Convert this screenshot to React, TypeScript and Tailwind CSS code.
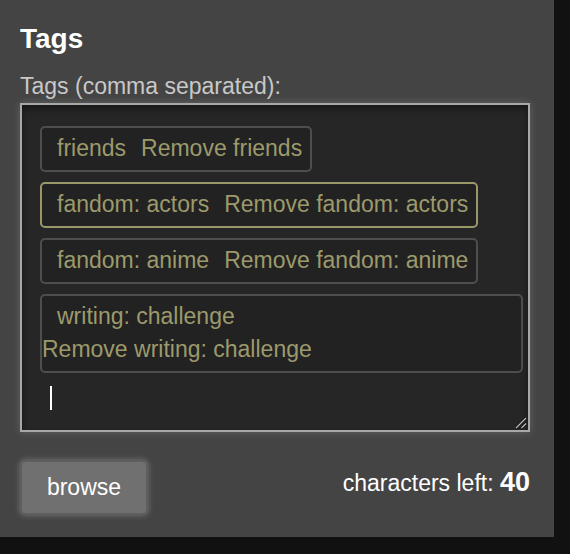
import React from 'react';

const tags = ['friends', 'fandom: actors', 'fandom: anime', 'writing: challenge'];

function Tag({ name, active }: { name: string; active?: boolean }) {
  return (
    <li
      className={`inline-block max-w-full rounded-[5px] border-2 bg-[#222] pt-[4px] pb-[5px] pr-[8px] leading-[33px] ${
        active ? 'border-[#9a9868]' : 'border-[#4e4e4e]'
      }`}
    >
      <span className="px-[15px]">{name}</span>
      <button className="text-[#9c9a6c]">Remove {name}</button>
    </li>
  );
}

export default function App() {
  return (
    <div className="h-[554px] w-[570px] bg-[#111] font-['Liberation_Sans',Arial,sans-serif]">
      <section className="h-[537px] w-[554px] bg-[#444] px-5 pt-[23px]">
        {/* Heading */}
        <h2 className="text-[28px] font-bold leading-[32px] text-white">Tags</h2>

        <label className="mt-[18px] block text-[23px] leading-[26px] text-[#c8c8c8]">
          Tags (comma separated):
        </label>

        {/* Tag input */}
        <div className="relative mt-[4px] h-[329px] w-[510px] border-2 border-[#a8a8a8] bg-[#262626] shadow-[0_0_8px_rgba(255,255,255,0.18),inset_0_4px_6px_rgba(0,0,0,0.4)]">
          <ul className="flex flex-col items-start gap-[10px] pl-[18px] pr-[5px] pt-[21px] text-[23px] text-[#9c9a6c]">
            {tags.map((t, i) => (
              <Tag key={t} name={t} active={i === 1} />
            ))}
          </ul>
          <div className="ml-[28px] mt-[13px] h-[24px] w-[2px] bg-white" />
          <svg className="absolute bottom-[1px] right-[1px]" width="13" height="13" viewBox="0 0 13 13">
            <path d="M12 2 L2 12 M12 7.5 L7.5 12" stroke="#111" strokeWidth="3" />
            <path d="M12 2 L2 12 M12 7.5 L7.5 12" stroke="#bbb" strokeWidth="1.3" />
          </svg>
        </div>

        {/* Footer */}
        <div className="mt-[28px] flex items-start justify-between">
          <button className="h-[55px] w-[128px] rounded-[5px] border-2 border-[#5e5e5e] bg-[#707070] text-[23px] text-white shadow-[0_0_6px_rgba(255,255,255,0.28)]">
            browse
          </button>
          <p className="mr-[4px] mt-[7px] text-[23px] leading-[30px] text-white">
            characters left: <span className="text-[27px] font-bold">40</span>
          </p>
        </div>
      </section>
    </div>
  );
}
